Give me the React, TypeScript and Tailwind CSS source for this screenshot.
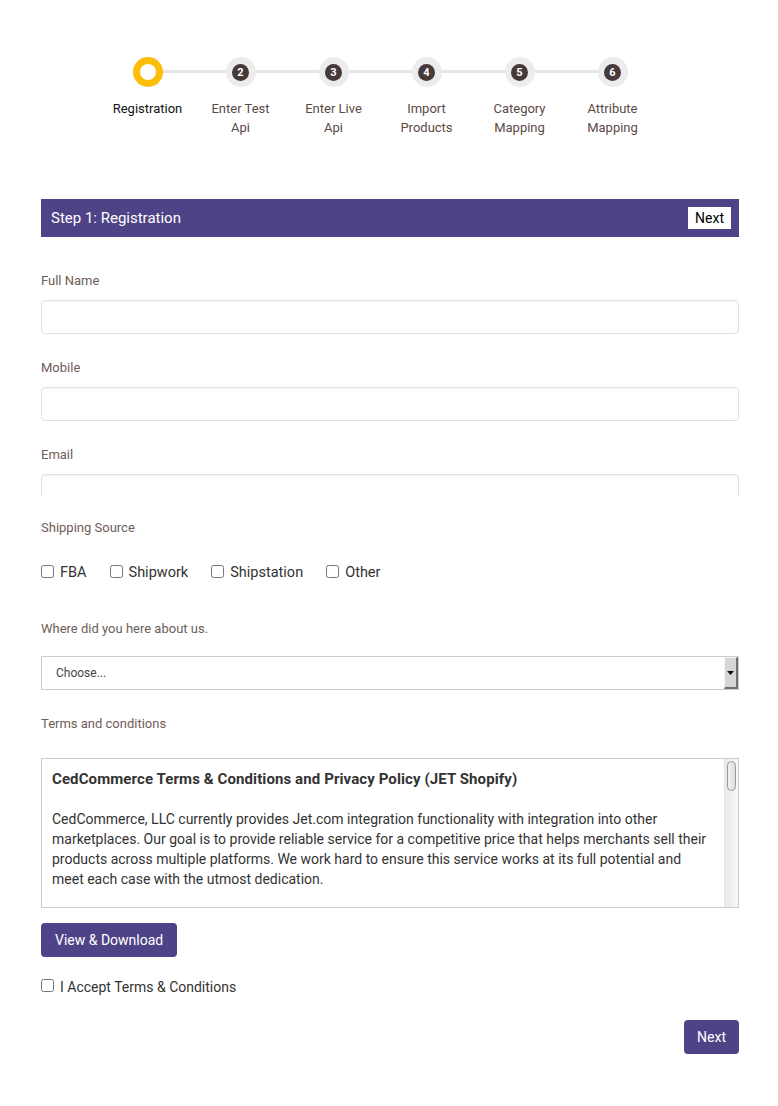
import { useState } from 'react';

const steps = [
  { n: 1, label: ['Registration'] },
  { n: 2, label: ['Enter Test', 'Api'] },
  { n: 3, label: ['Enter Live', 'Api'] },
  { n: 4, label: ['Import', 'Products'] },
  { n: 5, label: ['Category', 'Mapping'] },
  { n: 6, label: ['Attribute', 'Mapping'] },
];

function Stepper() {
  return (
    <div className="relative flex pl-[101px] pt-[57px]">
      {/* connector line between first and last step */}
      <div className="absolute left-[148px] top-[70px] h-[3px] w-[465px] bg-[#e6e6e6]" />
      {steps.map((s) => (
        <div key={s.n} className="relative flex w-[93px] flex-col items-center">
          {s.n === 1 ? (
            <div className="flex h-[30px] w-[30px] items-center justify-center rounded-full bg-[#fbbd08]">
              <div className="h-[16px] w-[16px] rounded-full bg-white" />
            </div>
          ) : (
            <div className="flex h-[30px] w-[30px] items-center justify-center rounded-full bg-[#ececec]">
              <div className="flex h-[17px] w-[17px] items-center justify-center rounded-full bg-[#45393a] text-[11px] font-bold leading-none text-white">
                {s.n}
              </div>
            </div>
          )}
          <div
            className={`mt-[12px] text-center text-[13px] leading-[19px] ${
              s.n === 1 ? 'text-[#111]' : 'text-[#5b4a46]'
            }`}
          >
            {s.label.map((l) => (
              <div key={l}>{l}</div>
            ))}
          </div>
        </div>
      ))}
    </div>
  );
}

function Label({ children, className = '' }: { children: React.ReactNode; className?: string }) {
  return <div className={`text-[13px] leading-[16px] text-[#6e5d58] ${className}`}>{children}</div>;
}

function TextInput() {
  return (
    <input
      type="text"
      className="block h-[34px] w-full rounded-[4px] border border-[#e2e2e2] bg-white shadow-[inset_0_1px_1px_rgba(0,0,0,0.04)] outline-none"
    />
  );
}

function Check({ label, className = '' }: { label: string; className?: string }) {
  return (
    <label className={`flex items-center ${className}`}>
      <input type="checkbox" className="m-0 -mt-[3px] h-[13px] w-[13px]" />
      <span className="ml-[6px] text-[14.5px] leading-[18px] text-[#333]">{label}</span>
    </label>
  );
}

export default function App() {
  const [accepted, setAccepted] = useState(false);

  return (
    <div className="min-h-[1106px] bg-white font-['Roboto',sans-serif]">
      <Stepper />

      <div className="ml-[41px] w-[698px] pt-[62px]">
        {/* step header */}
        <div className="flex h-[38px] items-center justify-between bg-[#4f4387] pl-[10px] pr-[8px]">
          <span className="text-[15px] text-white">Step 1: Registration</span>
          <button className="h-[22px] bg-white px-[7px] text-[14px] leading-[22px] text-black">Next</button>
        </div>

        <Label className="mt-[36px]">Full Name</Label>
        <div className="mt-[11px]">
          <TextInput />
        </div>

        <Label className="mt-[26px]">Mobile</Label>
        <div className="mt-[11px]">
          <TextInput />
        </div>

        <Label className="mt-[26px]">Email</Label>
        <div className="mt-[11px] h-[23px] overflow-hidden">
          <TextInput />
        </div>

        <Label className="mt-[23px]">Shipping Source</Label>
        <div className="mt-[28px] flex">
          <Check label="FBA" className="mr-[23px]" />
          <Check label="Shipwork" className="mr-[23px]" />
          <Check label="Shipstation" className="mr-[23px]" />
          <Check label="Other" />
        </div>

        <Label className="mt-[39px]">Where did you here about us.</Label>
        <div className="mt-[19px] flex h-[34px] items-stretch border border-[#cccccc] bg-white">
          <div className="flex flex-1 items-center pl-[14px] text-[12px] text-[#444]">Choose...</div>
          <div className="flex w-[14px] items-center justify-center border-b-2 border-r-2 border-l border-t border-b-[#6f6f6f] border-l-[#f4f4f4] border-r-[#6f6f6f] border-t-[#f4f4f4] bg-[#d6d6d6]">
            <svg width="7" height="4" viewBox="0 0 7 4">
              <path d="M0 0h7L3.5 4z" fill="#111" />
            </svg>
          </div>
        </div>

        <Label className="mt-[26px]">Terms and conditions</Label>
        <div className="mt-[26px] flex h-[150px] border border-[#cccccc] bg-white">
          <div className="flex-1 overflow-hidden pl-[10px] pr-[8px] pt-[10px]">
            <div className="text-[15px] font-bold leading-[20px] tracking-[0.1px] text-[#333]">
              CedCommerce Terms &amp; Conditions and Privacy Policy (JET Shopify)
            </div>
            <p className="mt-[20px] text-[14px] leading-[20px] text-[#333]">
              CedCommerce, LLC currently provides Jet.com integration functionality with integration into other
              marketplaces. Our goal is to provide reliable service for a competitive price that helps merchants sell their
              products across multiple platforms. We work hard to ensure this service works at its full potential and
              meet each case with the utmost dedication.
            </p>
          </div>
          {/* scrollbar */}
          <div className="w-[14px] border-l border-[#e6e6e6] bg-gradient-to-r from-[#e9e9e9] to-[#f7f7f7] px-[2px] pt-[2px]">
            <div className="h-[30px] rounded-[5px] border border-[#9a9a9a] bg-gradient-to-r from-[#f2f2f2] to-[#dcdcdc]" />
          </div>
        </div>

        <button className="mt-[15px] h-[34px] rounded-[4px] bg-[#4f4387] px-[14px] text-[14px] text-white">
          View &amp; Download
        </button>

        <label className="mt-[21px] flex items-center">
          <input
            type="checkbox"
            className="m-0 -mt-[3px] h-[13px] w-[13px]"
            checked={accepted}
            onChange={(e) => setAccepted(e.target.checked)}
          />
          <span className="ml-[6px] text-[14px] leading-[18px] text-[#333]">I Accept Terms &amp; Conditions</span>
        </label>

        <div className="mt-[24px] flex justify-end">
          <button className="h-[34px] rounded-[4px] bg-[#4f4387] px-[13px] text-[14px] text-white">Next</button>
        </div>
      </div>
    </div>
  );
}
